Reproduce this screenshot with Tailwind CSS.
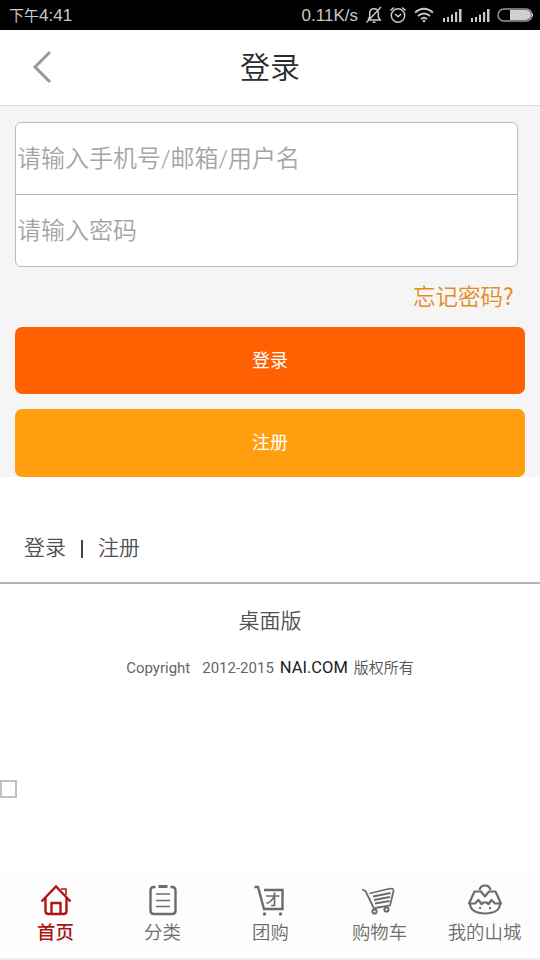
<!DOCTYPE html>
<html lang="zh-CN">
<head>
<meta charset="utf-8">
<title>登录</title>
<script src="https://cdn.jsdelivr.net/npm/@tailwindcss/browser@4"></script>
</head>
<body class="flex h-[960px] w-[540px] flex-col overflow-hidden bg-white font-['Roboto','Noto_Sans_CJK_SC',sans-serif]">
  <div class="flex h-[30px] shrink-0 items-center bg-black pl-[9px] pr-[6px] text-[#c8c8c8]">
    <span class="pt-px font-['Liberation_Sans','Noto_Sans_CJK_SC',sans-serif] text-[15px] leading-[30px]">下午<span class="text-[17px]">4:41</span></span>
    <span class="ml-auto mr-[7px] pt-[2px] font-['Liberation_Sans',sans-serif] text-[17px] leading-[28px]">0.11K/s</span>
    <svg class="mr-[6px] h-[18px] w-[18px]" viewBox="0 0 18 18" fill="none" stroke="currentColor" stroke-width="1.5"><path d="M3 13.5 4.7 11V7.5C4.7 4.5 6.3 2.7 9 2.7s4.300 1.800 4.300 4.800V11l2 3H4M1.500 16.500 16 1M7.500 16.200h3"/></svg>
    <svg class="mr-[7px] h-[18px] w-[18px]" viewBox="0 0 18 18" fill="none" stroke="currentColor" stroke-width="1.500"><circle cx="9" cy="9.500" r="6.700"/><path d="M1.500 4.500 4.800 1.500M16.500 4.500 13.200 1.500M6 8l3 2.700L12.300 8"/></svg>
    <svg class="mr-[8px] h-[16px] w-[20px]" viewBox="0 0 20 16" fill="none" stroke="currentColor" stroke-width="2"><path d="M1 5.500Q10-2 19 5.500M4 9q6-5 12 0M7 12q3-2.500 6 0"/><circle cx="10" cy="14" r="1.300" fill="currentColor" stroke="none"/></svg>
    <svg class="mr-[8px] h-[14px] w-[20px]" viewBox="0 0 20 14" fill="currentColor"><path d="M1 10h2v4H1zM5 9h2v5H5zM9 6.500h2V14H9zM13 4h2.200v10H13zM17 1h2.500v13H17z"/></svg>
    <svg class="mr-[7px] h-[14px] w-[20px]" viewBox="0 0 20 14" fill="currentColor"><path d="M1 10h2v4H1zM5 9h2v5H5zM9 6.500h2V14H9zM13 4h2.200v10H13zM17 1h2.500v13H17z"/></svg>
    <svg class="h-[14px] w-[37px]" viewBox="0 0 37 14"><rect x="1" y="1" width="34" height="12" rx="6" fill="none" stroke="#9a9a9a" stroke-width="1.500"/><path d="M13 2h16a5 5 0 0 1 0 10H13zM35 5q2 2 0 4z" fill="#d0d0d0"/></svg>
  </div>

  <header class="grid h-[76px] shrink-0 grid-cols-[1fr_auto_1fr] items-center border-b border-[#dcdcdc]">
    <svg class="ml-[32px] mt-[-2px] h-[34px] w-[20px]" viewBox="0 0 20 34" fill="none" stroke="#999" stroke-width="3"><path d="M18 2 3 17 18 32"/></svg>
    <h1 class="text-[30px] font-[350] leading-[40px] text-[#2b2b2b]">登录</h1>
  </header>

  <main class="flex h-[371px] shrink-0 flex-col bg-[#f5f5f5] px-[15px] pt-[16px]">
    <div class="h-[145px] w-[503px] rounded-[6px] border-[1.500px] border-[#bbb] bg-white text-[24px] font-[350] text-[#a5a5a5]">
      <div class="flex h-[72px] items-center border-b border-[#b5b5b5] pl-px">请输入手机号/邮箱/用户名</div>
      <div class="flex h-[71px] items-center pl-px">请输入密码</div>
    </div>
    <a class="mt-[12px] mr-[11px] h-[34px] w-[101px] self-end whitespace-nowrap text-[22.500px] font-[350] leading-[33px] text-[#e58a1c]">忘记密码<span class="font-['Noto_Sans_CJK_SC',sans-serif] font-normal">?</span></a>
    <button class="mt-[14px] h-[67px] shrink-0 rounded-[7px] bg-[#ff6000] pb-px text-[18px] text-white">登录</button>
    <button class="mt-[15px] h-[68px] shrink-0 rounded-[7px] bg-[#ff9f10] pb-[2px] text-[18px] text-white">注册</button>
  </main>

  <div class="mt-[50px] flex h-[57px] shrink-0 items-start border-b-2 border-[#b5b5b5] pl-[24px] pt-[6px] text-[21px] font-[350] leading-[30px] text-[#505050]">
    <span>登录</span>
    <i class="ml-[15px] mt-[7px] h-[18px] w-[2px] bg-[#444]"></i>
    <span class="ml-[15px]">注册</span>
  </div>
  <div class="mt-[22px] text-center text-[21px] font-[350] leading-[30px] text-[#505050]">桌面版</div>
  <div class="mt-[20px] flex items-baseline justify-center text-[15px] leading-[24px] text-[#666]">
    <span>Copyright</span><span class="ml-[12px]">2012-2015</span><span class="ml-[6px] text-[16.500px] text-[#222]">NAI.COM</span><span class="ml-[6px] font-[350] text-[#555]">版权所有</span>
  </div>
  <div class="mt-[100px] h-[18px] w-[17px] shrink-0 border-2 border-[#c2c2c2]"></div>

  <nav class="mt-auto grid h-[90px] shrink-0 grid-cols-[107px_107px_109px_109px_101px] border-b-2 border-[#eee] bg-[#fdfdfd] pl-[2px] pt-[12px] text-[18.400px] font-[350] leading-[26px] text-[#6c6c6c]">
    <div class="flex flex-col items-center text-[#ad1414]">
      <svg class="h-[36px] w-[36px]" viewBox="0 0 36 36" fill="none" stroke="currentColor" stroke-width="2.400"><path d="M3.500 19.500 18 4.500l14.500 15M7.500 16v13q0 3 3 3h15q3 0 3-3V16M13.500 32V21h9v11"/><path d="M23 7h5v6" stroke-width="1.500"/></svg>
      <span class="mt-[2px] font-medium">首页</span>
    </div>
    <div class="flex flex-col items-center">
      <svg class="h-[36px] w-[36px]" viewBox="0 0 36 36" fill="none" stroke="currentColor" stroke-width="2.400"><path d="M10.500 5H9q-3.500 0-3.500 3.500v20Q5.500 32 9 32h18q3.500 0 3.500-3.500v-20Q30.500 5 27 5h-1.500"/><path d="M13.500 4.500h9" stroke-width="3"/><path d="M11 12h14M11 18.500h14M11 24.500h14" stroke-width="1.500"/></svg>
      <span class="mt-[2px]">分类</span>
    </div>
    <div class="flex flex-col items-center">
      <svg class="h-[36px] w-[36px]" viewBox="0 0 36 36" fill="none" stroke="currentColor" stroke-width="2.400"><path d="M1.500 5H5l6 22h18.500V8H11"/><path d="M13 14h13.500M21.500 10.500v13H18M21 14.500q-2 5-7.500 7" stroke-width="1.700"/><circle cx="11.500" cy="32" r="1.700" fill="currentColor" stroke="none"/><circle cx="27.500" cy="32" r="1.700" fill="currentColor" stroke="none"/></svg>
      <span class="mt-[2px]">团购</span>
    </div>
    <div class="flex flex-col items-center">
      <svg class="h-[36px] w-[36px]" viewBox="0 0 36 36" fill="none" stroke="currentColor" stroke-width="1.800"><path d="M0 7.500 3.500 9l9 18.500M7.500 11.500 26 7q6-1.500 5.500 2L28 23.500 13 26"/><path d="m11 14.500 17.500-3.500M12 18l16-3M13 21.500l14.500-2.500"/><circle cx="12.500" cy="29.500" r="2.100" stroke-width="2"/><circle cx="24.500" cy="27.500" r="2.100" stroke-width="2"/></svg>
      <span class="mt-[2px]">购物车</span>
    </div>
    <div class="flex flex-col items-center">
      <svg class="h-[36px] w-[36px]" viewBox="0 0 36 36" fill="none" stroke="currentColor" stroke-width="2.200" stroke-linejoin="round"><path d="M12.500 8q1-4.500 5.500-4.500T23.500 8M7.500 9.500H14l4 5 4-5h6.500L34 21.500H28l-3.500-3.500-3 4-2-1.500h-3l-2 1.500-3-4L8 21.500H2zM3 21.500C3 28 9 31.500 18 31.500s15-3.500 15-10"/><path d="M13 25v2M23 25v2" stroke-width="2"/></svg>
      <span class="mt-[2px]">我的山城</span>
    </div>
  </nav>
</body>
</html>
